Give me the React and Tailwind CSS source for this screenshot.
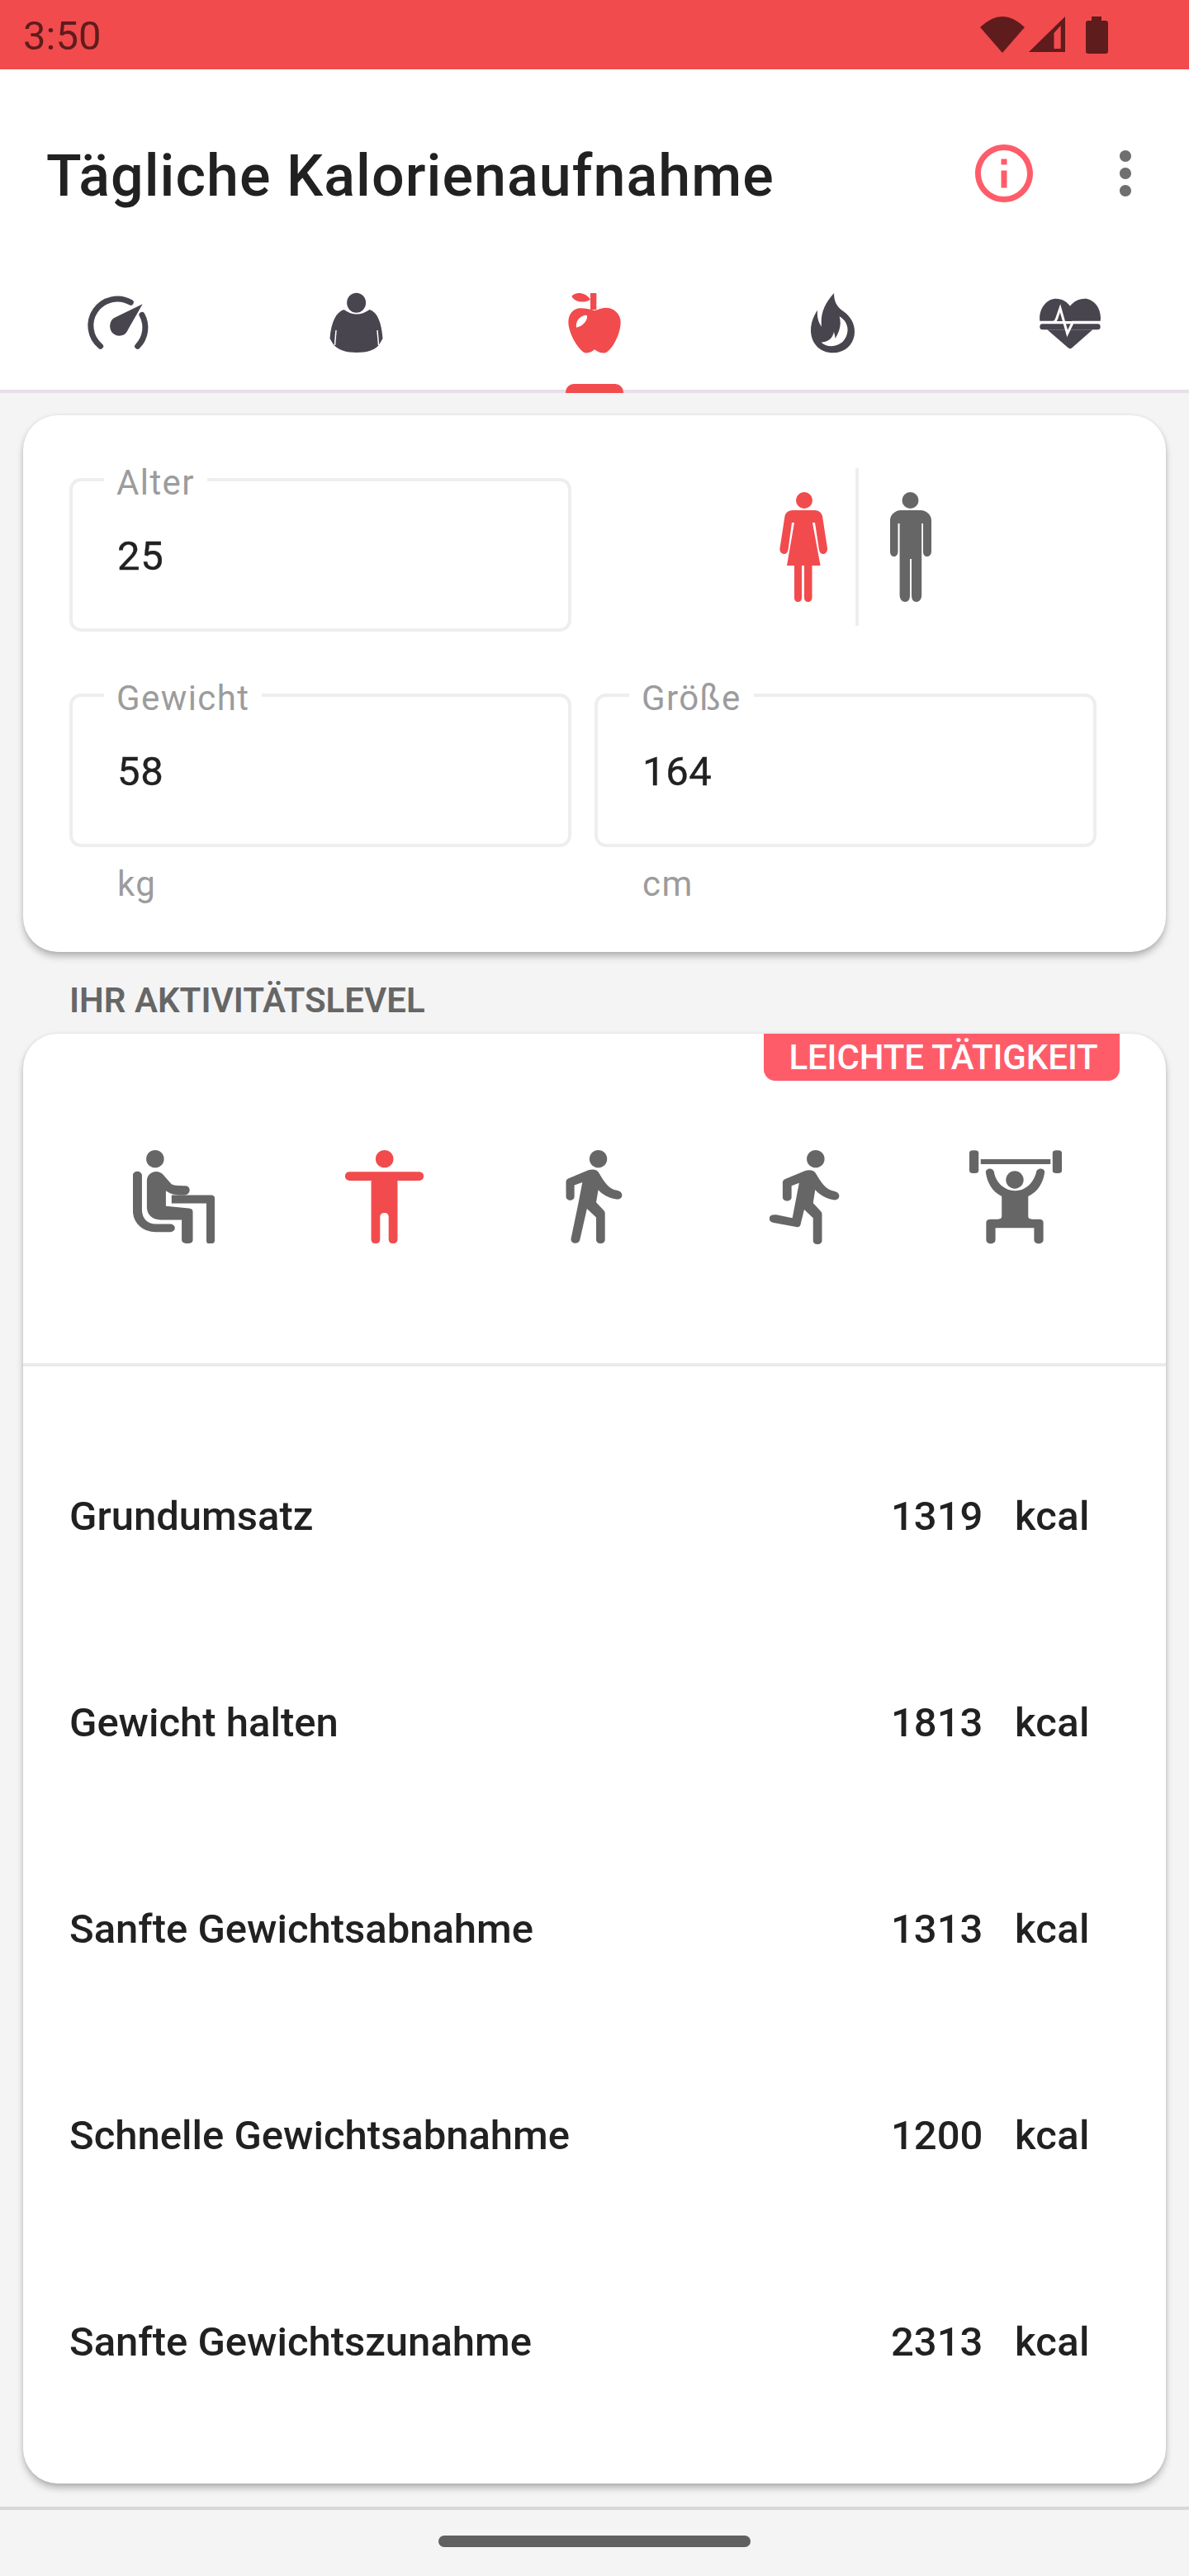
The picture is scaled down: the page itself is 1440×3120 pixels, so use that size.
import React from "react";

const RED = "#f24b4d";
const GREY = "#666666";
const TAB = "#49454f";

function Gauge() {
  return (
    <svg width="100" height="100" viewBox="12 0 300 300">
      <path d="M95 238 A97 97 0 0 1 205 79" fill="none" stroke={TAB} strokeWidth="21" strokeLinecap="round" />
      <path d="M246 124 A97 97 0 0 1 230 238" fill="none" stroke={TAB} strokeWidth="21" strokeLinecap="round" />
      <path d="M248 85 L145 135 C120 150 125 200 165 200 C185 200 192 185 195 178Z" fill={TAB} />
    </svg>
  );
}
function Person() {
  return (
    <svg width="100" height="100" viewBox="0 0 100 100">
      <ellipse cx="49.6" cy="26.7" rx="11.5" ry="12" fill={TAB} />
      <path d="M34.5 35 Q50 46 65.5 35 C75 38 80 50 81.5 70 L78 76 C74 84 62 87 50 87 C38 87 26 84 21 76 L17.5 70 C19 50 25 38 34.5 35Z" fill={TAB} />
      <path d="M25 60 L23.5 78 M75 60 L76.5 78" stroke="#fff" strokeWidth="1.5" fill="none" />
    </svg>
  );
}
function Apple() {
  return (
    <svg width="100" height="100" viewBox="30 0 300 300">
      <path d="M165 45 H187 V105 H165Z" fill={RED} />
      <path d="M97 57 C110 40 145 40 165 68 C145 82 110 80 97 57Z" fill={RED} />
      <path d="M130 100 C100 100 85 125 85 150 C85 190 120 250 145 262 C160 265 175 255 180 250 C190 258 205 265 220 262 C245 250 275 195 275 150 C275 120 250 98 220 98 C205 98 195 105 180 108 C165 105 150 100 130 100Z" fill={RED} />
      <path d="M114 170 C110 150 125 125 152 125 C158 140 140 165 114 170Z" fill="#fff" />
    </svg>
  );
}
function Flame() {
  return (
    <svg width="100" height="100" viewBox="-6 0 300 300">
      <path d="M150 45 C150 75 160 95 185 112 C210 130 225 155 225 185 C225 230 190 262 146 262 C100 262 66 228 66 180 C66 150 78 125 90 107 C88 130 92 150 105 167 C100 120 115 85 150 45Z" fill={TAB} />
      <path d="M170 130 C195 145 205 170 197 195 C190 222 165 238 140 238 C125 238 112 232 104 224 C125 222 145 212 150 185 C152 195 155 205 155 210 C170 185 178 160 170 130Z" fill="#fff" />
    </svg>
  );
}
function Heart() {
  return (
    <svg width="100" height="100" viewBox="858 0 300 300">
      <path d="M898 147 C892 100 925 65 955 65 C980 65 998 78 1008 92 C1018 78 1038 65 1062 65 C1092 65 1125 100 1118 147Z" fill={TAB} />
      <rect x="898" y="157" width="220" height="21" rx="10" fill={TAB} />
      <path d="M925 178 H1090 L1015 244 Q1008 250 1001 244Z" fill={TAB} />
      <path d="M890 151 H945 Q955 151 960 135 L972 100 L998 192 L1018 151 H1125" fill="none" stroke="#fff" strokeWidth="9" />
    </svg>
  );
}
function Info() {
  return (
    <svg width="84" height="84" viewBox="0 0 24 24" fill="#ff5c6a">
      <path d="M11 7h2v2h-2zm0 4h2v6h-2zm1-9C6.48 2 2 6.48 2 12s4.48 10 10 10 10-4.48 10-10S17.52 2 12 2zm0 18c-4.41 0-8-3.59-8-8s3.59-8 8-8 8 3.59 8 8-3.59 8-8 8z" />
    </svg>
  );
}
function More() {
  return (
    <svg width="84" height="84" viewBox="0 0 24 24" fill="#6f6f6f">
      <path d="M12 8c1.1 0 2-.9 2-2s-.9-2-2-2-2 .9-2 2 .9 2 2 2zm0 2c-1.1 0-2 .9-2 2s.9 2 2 2 2-.9 2-2-.9-2-2-2zm0 6c-1.1 0-2 .9-2 2s.9 2 2 2 2-.9 2-2-.9-2-2-2z" />
    </svg>
  );
}
function Woman() {
  return (
    <svg width="58" height="134" viewBox="0 0 58 134" fill={RED}>
      <circle cx="30" cy="10" r="10" />
      <path d="M16 22H43C47.5 22 51 25 52 29L58 68C58.5 72 56 75 53 75C50.5 75 48.5 73 48 70L43 37H40L49.6 89H39.5V128C39.5 131 37 133 35 133C32 133 30 131 30 128V89H27V128C27 131 25 133 22.5 133C20 133 18 131 18 128V89H9L18 37H15L10.5 70C10 73 8 75 5.5 75C2.5 75 0 72 0.5 68L6.5 29C7.5 25 11 22 16 22Z" />
    </svg>
  );
}
function Man() {
  return (
    <svg width="50" height="134" viewBox="0 0 50 134" fill={GREY}>
      <circle cx="24.5" cy="10" r="10" />
      <path d="M13 22H37C44 22 50 28 50 34V72C50 76 47 78 45 78C42 78 40 76 40 72V38H38.2V125C38.2 130 35 133 32 133C28 133 26 130 26 125V81H24V125C24 130 22 133 18 133C15 133 11.6 130 11.6 125V38H9.5V72C9.5 76 7 78 5 78C2 78 0 76 0 72V34C0 28 6 22 13 22Z" />
    </svg>
  );
}
function Sit() {
  return (
    <svg width="99" height="113" viewBox="108 68 258 340" preserveAspectRatio="none" fill={GREY}>
      <ellipse cx="178" cy="100" rx="28" ry="32" />
      <path d="M122 160V285C122 330 150 352 180 352H226" fill="none" stroke={GREY} strokeWidth="29" strokeLinecap="round" />
      <path d="M152 180C152 145 190 135 205 160L228 190C235 198 250 198 275 198C292 200 292 232 268 232C245 232 228 230 212 216V272L285 280C293 281 297 285 297 292V395C297 405 290 408 280 408C268 408 262 402 262 395V322H195C170 322 152 305 152 275Z" />
      <path d="M230 232H355C362 232 366 236 366 243V398C366 405 362 408 355 408H348C342 408 340 405 340 398V262H230Z" />
    </svg>
  );
}
function Stand() {
  return (
    <svg width="95" height="113" viewBox="778 68 247 340" preserveAspectRatio="none" fill={RED}>
      <ellipse cx="902" cy="100" rx="28" ry="32" />
      <rect x="778" y="147" width="247" height="32" rx="14" />
      <path d="M860 170H943V392C943 402 938 408 929 408C920 408 915 402 915 392V312C915 302 910 297 902 297C893 297 888 302 888 312V392C888 402 883 408 874 408C865 408 860 402 860 392Z" />
    </svg>
  );
}
function Walk() {
  return (
    <svg width="69" height="113" viewBox="92 458 136 340" preserveAspectRatio="none" fill={GREY}>
      <ellipse cx="170" cy="490" rx="21" ry="32" />
      <path d="M145 532L98 562Q93 566 93 572V627C93 645 113 645 113 627V586L132 575L122 655L105 780C103 802 124 802 126 785L143 672L165 703V785C165 802 186 802 186 785V688Q186 682 183 678L165 648L170 603C180 620 195 632 213 637C230 640 232 610 215 605C195 600 185 575 172 542C168 528 155 526 145 532Z" />
    </svg>
  );
}
function Run() {
  return (
    <svg width="85" height="114" viewBox="572 456 166 342" preserveAspectRatio="none" fill={GREY}>
      <ellipse cx="681" cy="488" rx="21" ry="32" />
      <path d="M655 532L608 562Q603 566 603 572V627C603 645 624 645 624 627V586L642 575L626 703L588 691C568 686 566 715 582 720L635 735C640 737 644 733 645 728L654 672L675 703V785C675 802 696 802 696 785V688Q696 682 693 678L675 648L680 600C690 618 705 632 723 637C740 640 742 610 725 605C705 600 695 575 682 542C678 528 665 526 655 532Z" />
    </svg>
  );
}
function Lift() {
  return (
    <svg width="112" height="115" viewBox="1046 456 220 345" preserveAspectRatio="none" fill={GREY}>
      <rect x="1073" y="492" width="166" height="18" />
      <rect x="1046" y="460" width="22" height="83" rx="9" />
      <rect x="1244" y="460" width="22" height="83" rx="9" />
      <ellipse cx="1154" cy="567" rx="21" ry="32" />
      <path d="M1085 540C1085 522 1104 522 1105 540C1108 570 1125 605 1155 607C1185 605 1200 570 1205 540C1206 522 1226 522 1225 540C1222 575 1210 610 1186 627V700Q1186 710 1195 710H1212Q1222 710 1222 722V785C1222 803 1200 803 1200 785V742H1108V785C1108 803 1086 803 1086 785V722Q1086 710 1097 710H1114Q1123 710 1123 700V627C1100 610 1088 575 1085 540Z" />
    </svg>
  );
}

function Field({ label, value }) {
  return (
    <div className="relative flex h-[186px] items-center rounded-[14px] border-4 border-[#eeeeee] pl-[54px]">
      <span className="absolute -top-[23px] left-[38px] bg-white px-[15px] text-[42px] leading-[50px] tracking-[1.4px] text-[#9c9c9c]">
        {label}
      </span>
      <span className="mt-[4px] text-[49px] leading-[60px] tracking-[0.6px] text-[#212121] [-webkit-text-stroke:0.4px_#212121]">{value}</span>
    </div>
  );
}

function Row({ label, value }) {
  return (
    <div className="flex h-[250px] items-center pl-[56px] text-[49px] font-medium leading-[60px] text-[#212121]">
      <span className="w-[995px]">{label}</span>
      <span className="w-[150px]">{value}</span>
      <span className="tracking-[0.3px]">kcal</span>
    </div>
  );
}

export default function App() {
  const tabs = [<Gauge key="g" />, <Person key="p" />, <Apple key="a" />, <Flame key="f" />, <Heart key="h" />];
  const rows = [
    ["Grundumsatz", "1319"],
    ["Gewicht halten", "1813"],
    ["Sanfte Gewichtsabnahme", "1313"],
    ["Schnelle Gewichtsabnahme", "1200"],
    ["Sanfte Gewichtszunahme", "2313"],
  ];
  return (
    <div className="flex h-[3120px] w-[1440px] flex-col overflow-hidden bg-[#f4f4f4] font-['Roboto',sans-serif]">
      {/* status bar */}
      <div className="flex h-[84px] items-center justify-between bg-[#f24b4d] pl-[28px] pr-[98px] text-[#5f1c1d]">
        <span className="mt-[4px] text-[49px] font-normal leading-[60px]">3:50</span>
        <div className="flex items-center">
          <svg width="54" height="44" viewBox="0 0 54 44" fill="#5f1c1d">
            <path d="M0 13Q27 -13 54 13L27 44Z" />
          </svg>
          <svg className="ml-[5px]" width="44" height="44" viewBox="0 0 44 44">
            <path d="M44 0V43H0Z" fill="#5f1c1d" />
            <path d="M30.5 20L38.7 11V39H30.5Z" fill="#f24b4d" />
          </svg>
          <svg className="ml-[25px]" width="27" height="45" viewBox="0 0 27 45" fill="#5f1c1d">
            <path d="M7 0H19V5H24Q27 5 27 8V42Q27 45 24 45H3Q0 45 0 42V8Q0 5 3 5H7Z" />
          </svg>
        </div>
      </div>

      {/* toolbar */}
      <div className="flex h-[252px] items-center bg-white pl-[56px] pr-[35px]">
        <span className="mt-[6px] flex-1 text-[70px] font-medium leading-[84px] tracking-[1.05px] text-[#212121]">
          Tägliche Kalorienaufnahme
        </span>
        <Info />
        <div className="ml-[63px]">
          <More />
        </div>
      </div>

      {/* tabs */}
      <div className="grid h-[140px] grid-cols-5 border-b-4 border-[#e6e0e9] bg-white">
        {tabs.map((t, i) => (
          <div key={i} className="relative flex justify-center pt-[4px]">
            {t}
            {i === 2 && (
              <span className="absolute -bottom-[4px] left-1/2 h-[11px] w-[70px] -translate-x-1/2 rounded-t-[10px] bg-[#f24b4d]" />
            )}
          </div>
        ))}
      </div>

      {/* content */}
      <div className="flex-1 px-[28px] pt-[27px]">
        <div className="h-[650px] rounded-[42px] bg-white pl-[56px] pt-[76px] shadow-[0_6px_10px_-1px_rgba(0,0,0,0.28),0_0_5px_rgba(0,0,0,0.08)]">
          <div className="grid grid-cols-[608px_608px] gap-x-[28px] gap-y-[75px]">
            <Field label="Alter" value="25" />
            <div className="-mt-[12px] flex h-[191px] items-center pl-[224px]">
              <Woman />
              <div className="ml-[34px] mr-[38px] h-[191px] w-[4px] bg-[#eeeeee]" />
              <Man />
            </div>
            <div>
              <Field label="Gewicht" value="58" />
              <div className="mt-[20px] pl-[58px] text-[42px] leading-[50px] tracking-[1.4px] text-[#9c9c9c]">kg</div>
            </div>
            <div>
              <Field label="Größe" value="164" />
              <div className="mt-[20px] pl-[58px] text-[42px] leading-[50px] tracking-[1.4px] text-[#9c9c9c]">cm</div>
            </div>
          </div>
        </div>

        <div className="mb-[15px] mt-[34px] pl-[56px] text-[42px] font-semibold leading-[50px] text-[#666666]">
          IHR AKTIVITÄTSLEVEL
        </div>

        <div className="h-[1756px] rounded-[42px] bg-white shadow-[0_6px_10px_-1px_rgba(0,0,0,0.28),0_0_5px_rgba(0,0,0,0.08)]">
          <div className="flex justify-end pr-[56px]">
            <div className="flex h-[57px] w-[431px] items-center justify-center rounded-b-[14px] bg-[#ff5c6a] pl-[4px] text-[42px] font-medium leading-[50px] tracking-[-0.1px] text-white">
              LEICHTE TÄTIGKEIT
            </div>
          </div>
          <div className="mt-[83px] grid h-[114px] grid-cols-5 items-center justify-items-center px-[55px]">
            <Sit />
            <Stand />
            <Walk />
            <Run />
            <Lift />
          </div>
          <div className="mt-[145px] h-[4px] bg-[#ebebeb]" />
          <div className="pt-[57px]">
            {rows.map(([l, v]) => (
              <Row key={l} label={l} value={v} />
            ))}
          </div>
        </div>
      </div>

      {/* nav bar */}
      <div className="flex h-[84px] justify-center border-t-4 border-[#d8d8d8] pt-[31px]">
        <div className="h-[14px] w-[378px] rounded-full bg-[#606060]" />
      </div>
    </div>
  );
}
